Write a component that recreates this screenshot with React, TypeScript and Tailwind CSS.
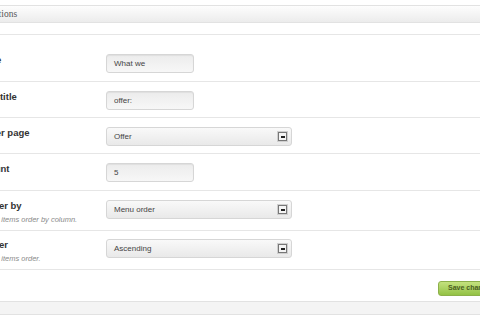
import React from "react";

const Input = ({ value }: { value: string }) => (
  <div className="w-[88px] h-[19px] rounded-[3px] border border-[#d6d6d6] bg-gradient-to-b from-[#ececec] to-[#f7f7f7] shadow-[inset_0_1px_1px_rgba(0,0,0,0.06)] flex items-center pl-[7px] text-[8px] text-[#444]">
    {value}
  </div>
);

const Select = ({ value }: { value: string }) => (
  <div className="w-[186px] h-[19px] rounded-[3px] border border-[#d6d6d6] bg-gradient-to-b from-[#f9f9f9] to-[#e9e9e9] flex items-center justify-between pl-[7px] pr-[4px] text-[8px] text-[#444]">
    <span>{value}</span>
    <div className="w-[9px] h-[9px] border border-[#777] bg-[#f4f4f4] flex items-center justify-center shadow-[0_0_0_1px_#cfcfcf]">
      <div className="w-[4px] h-[2px] bg-[#222]" />
    </div>
  </div>
);

const Row = ({
  label,
  desc,
  children,
  pt = "pt-[9px]",
  h,
}: {
  label: string;
  desc?: string;
  children: React.ReactNode;
  pt?: string;
  h: string;
}) => (
  <div className={`flex border-b border-[#e6e6e6] ${pt} ${h}`}>
    <div className="w-[124px] shrink-0">
      <div className="text-[9.5px] font-bold text-[#333] leading-[12px]">{label}</div>
      {desc && (
        <div className="text-[7.5px] italic text-[#8a8a8a] leading-[10px] mt-[3px] ml-[6px]">{desc}</div>
      )}
    </div>
    <div>{children}</div>
  </div>
);

export default function App() {
  return (
    <div
      className="w-[480px] h-[320px] bg-white overflow-hidden relative"
      style={{ fontFamily: '"Liberation Sans", Arial, sans-serif' }}
    >
      <div className="ml-[-18px] w-[520px]">
        <div className="h-[5px] bg-white" />
        <div className="h-[18px] border-y border-[#e2e2e2] bg-gradient-to-b from-[#fdfdfd] to-[#ececec] flex items-center pl-[5px]">
          <span
            className="text-[9.5px] text-[#555]"
            style={{ fontFamily: '"Liberation Serif", Georgia, serif' }}
          >
            Options
          </span>
        </div>
        <div className="h-[12px] border-b border-[#e6e6e6]" />
        <Row label="Title" pt="pt-[19px]" h="h-[47px]">
          <Input value="What we" />
        </Row>
        <Row label="Subtitle" h="h-[36px]">
          <Input value="offer:" />
        </Row>
        <Row label="Offer page" h="h-[36px]">
          <Select value="Offer" />
        </Row>
        <Row label="Count" h="h-[37px]">
          <Input value="5" />
        </Row>
        <Row label="Order by" desc="Set items order by column." h="h-[40px]">
          <Select value="Menu order" />
        </Row>
        <Row label="Order" desc="Set items order." pt="pt-[8px]" h="h-[39px]">
          <Select value="Ascending" />
        </Row>
        <div className="h-[31px] flex items-start justify-start pt-[11px]">
          <div className="ml-[456px] w-[70px] h-[15px] shrink-0 rounded-[3px] border border-[#8db04a] bg-gradient-to-b from-[#c4e27e] to-[#93c244] text-[7px] font-bold text-[#4b5e22] flex items-center pl-[9px] whitespace-nowrap">
            Save changes
          </div>
        </div>
        <div className="h-[14px] border-y border-[#e2e2e2] bg-[#f4f4f4]" />
      </div>
    </div>
  );
}
